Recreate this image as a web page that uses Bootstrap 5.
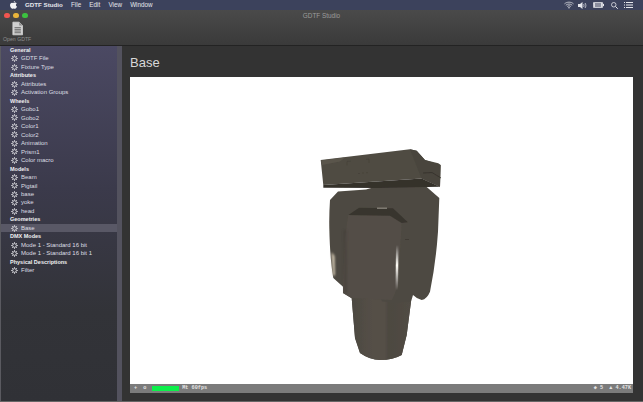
<!DOCTYPE html>
<html lang="en">
<head>
    <meta charset="UTF-8">
    <title>GDTF Studio</title>
    <link href="https://cdn.jsdelivr.net/npm/bootstrap@5.3.0/dist/css/bootstrap.min.css" rel="stylesheet">
    <style>
        html, body { height: 100%; }
        body {
            font-family: "Liberation Sans", Arial, sans-serif;
            background: #333;
            overflow: hidden;
        }
        .app-shell { width: 643px; height: 402px; }
        .mac-menubar {
            height: 10px;
            background: #3c425c;
            color: #e6e7ec;
            font-size: 6.3px;
            line-height: 10px;
            padding: 0 10px 0 10px;
        }
        .mac-menubar b { font-size: 6.2px; }
        .apple-mark { margin-right: 8px; }
        .menu-entry { margin-right: 8.2px; }
        .tray-icon { margin-right: 6.5px; }
        .mac-title {
            height: 35.5px;
            background: linear-gradient(#4a4a4a, #3a3a3a);
            border-bottom: 1px solid #232323;
        }
        .mac-caption {
            font-size: 6.4px;
            color: #9c9c9c;
            line-height: 12px;
            text-align: center;
        }
        .mac-lights { left: 4px; top: 2.6px; gap: 3.5px; }
        .light-dot { width: 5.5px; height: 5.5px; border-radius: 50%; }
        .dot-red { background: #f2564f; }
        .dot-amber { background: #e8b53a; }
        .dot-green { background: #3cc23f; }
        .open-tool {
            width: 28px;
            margin-left: 3px;
            margin-top: -1px;
            color: #8f8f8f;
            font-size: 5.2px;
            line-height: 7px;
            text-align: center;
            white-space: nowrap;
        }
        .work-row { min-height: 0; }
        .side-wrap { width: 122px; background: #2f2f33; }
        .side-tree {
            width: 117px;
            padding-top: 0.5px;
            background: linear-gradient(#4b4963, #3b3a4b 40%, #323338 75%, #303136);
            border-left: 1px solid #5a5a60;
        }
        .side-scroll { width: 5px; background: #53525e; }
        .tree-head, .tree-item {
            height: 8.48px;
            line-height: 8.48px;
            white-space: nowrap;
        }
        .tree-head { color: #f0f0f2; font-weight: 700; font-size: 5.5px; padding-left: 9px; }
        .tree-item { color: #dedee2; font-size: 6px; padding-left: 10px; gap: 3px; }
        .tree-item svg { flex: none; }
        .tree-item.is-picked { background: #595866; }
        .main-pane { padding: 0 10px 8px 8px; background: #333; min-width: 0; }
        .page-head {
            font-size: 13px;
            line-height: 17px;
            color: #d8d8d8;
            margin: 8px 0 6.5px;
            font-weight: 400;
        }
        .viewer-box { background: #fff; min-height: 0; }
        .viewer-box svg { display: block; }
        .viewer-stats {
            height: 9px;
            background: #7b7b7b;
            color: #e4e4e4;
            font-family: "Liberation Mono", monospace;
            font-weight: 700;
            font-size: 5.2px;
            line-height: 9px;
            padding: 0 2px 0 4px;
        }
        .stat-plus { margin-right: 6px; }
        .stat-gap { margin-right: 6px; }
        .fps-meter { width: 27px; height: 4.5px; background: #0cf04a; margin: 0 3px 0 6px; }
        .window-foot { height: 1px; background: #666; flex: none; }
    </style>
</head>
<body>
    <svg width="0" height="0" class="position-absolute">
        <symbol id="gear" viewBox="0 0 12 12">
            <g fill="none" stroke="#cfcfd4">
                <circle cx="6" cy="6" r="3.200" stroke-width="1.700"/>
                <path stroke-width="1.700" d="M6 .3v2.200M6 9.500v2.200M.3 6h2.200M9.500 6h2.200M2 2l1.500 1.500M8.500 8.500L10 10M2 10l1.500-1.500M8.500 3.500L10 2"/>
            </g>
        </symbol>
    </svg>

    <div class="app-shell d-flex flex-column">
        <div class="mac-menubar d-flex align-items-center">
            <svg width="7" height="8" viewBox="0 0 14 16" class="apple-mark"><path fill="#f2f2f5" d="M10.100 0c.1 1.300-1.200 3-2.900 3C7 1.600 8.500.2 10.100 0zM7.200 4c.8 0 1.700-.8 3.200-.8 1.300 0 2.400.7 3.100 1.700-2.600 1.600-2.100 5 .5 6.100-.7 1.800-2.200 4.500-3.800 4.500-1.100 0-1.500-.7-2.900-.7s-1.900.7-2.900.7C2.400 15.500 0 11.500 0 8.200 0 5 2 3.300 4 3.300c1.300 0 2.400.7 3.200.7z"/></svg>
            <b class="menu-entry">GDTF Studio</b>
            <span class="menu-entry">File</span>
            <span class="menu-entry">Edit</span>
            <span class="menu-entry">View</span>
            <span>Window</span>
            <div class="ms-auto d-flex align-items-center">
                <svg width="10" height="8" viewBox="0 0 22 16" class="me-1"><g fill="none" stroke="#e6e7ec" stroke-width="1.600"><path d="M1 5.500C6.500.5 15.500.5 21 5.500"/><path d="M4 8.500c4-3.500 10-3.500 14 0"/><path d="M7 11.300c2.500-2 5.500-2 8 0"/></g><path fill="#e6e7ec" d="M9 13.500c1.200-.8 2.800-.8 4 0l-2 2.500z"/></svg>
                <svg width="9" height="7" viewBox="0 0 18 14" class="tray-icon"><path fill="#e6e7ec" d="M0 4h4l5-4v14l-5-4H0z"/><path fill="none" stroke="#e6e7ec" stroke-width="1.500" d="M11 4c1.300 1.800 1.300 4.200 0 6M14 2c2.300 3 2.300 7 0 10"/></svg>
                <svg width="11" height="6" viewBox="0 0 22 12" class="tray-icon"><rect x=".5" y=".5" width="19" height="11" rx="2" fill="#d9dae0" stroke="#e6e7ec"/><rect x="20" y="4" width="2" height="4" fill="#e6e7ec"/><path fill="#3c425c" d="M5 2h2v8H5zM9 2h2v8H9zM13 2h2v8h-2z"/></svg>
                <svg width="7" height="7" viewBox="0 0 14 14" class="tray-icon"><circle cx="5.500" cy="5.500" r="4.500" fill="none" stroke="#e6e7ec" stroke-width="1.600"/><path stroke="#e6e7ec" stroke-width="2" d="M9 9l4.500 4.500"/></svg>
                <svg width="9" height="6" viewBox="0 0 18 12"><path fill="#e6e7ec" d="M0 0h2v2H0zM4 0h14v2H4zM0 5h2v2H0zM4 5h14v2H4zM0 10h2v2H0zM4 10h14v2H4z"/></svg>
            </div>
        </div>

        <div class="mac-title d-flex flex-column">
            <div class="position-relative mac-caption">
                GDTF Studio
                <div class="position-absolute d-flex mac-lights">
                    <span class="light-dot dot-red"></span>
                    <span class="light-dot dot-amber"></span>
                    <span class="light-dot dot-green"></span>
                </div>
            </div>
            <div class="open-tool">
                <svg width="11" height="15" viewBox="0 0 13 16" class="d-block mx-auto"><path fill="#cfcfcf" stroke="#e2e2e2" stroke-width=".8" d="M1 .5h7.500L12.500 4.500v11H1z"/><path fill="#8c8c8c" d="M8.500.5v4h4z"/><path stroke="#4f4f4f" stroke-width=".9" d="M3 7h7.500M3 9h7.500M3 11h7.500M3 13h7.500"/></svg>
                Open GDTF
            </div>
        </div>

        <div class="work-row d-flex flex-grow-1">
            <div class="side-wrap d-flex">
                <div class="side-tree" id="tree"></div>
                <div class="side-scroll"></div>
            </div>
            <div class="main-pane flex-grow-1 d-flex flex-column">
                <h1 class="page-head">Base</h1>
                <div class="viewer-box flex-grow-1 d-flex flex-column">
                    <svg class="flex-grow-1" width="503" height="307" viewBox="130 77 503 307">
                        <defs>
                            <filter id="soften" x="-5%" y="-5%" width="110%" height="110%"><feGaussianBlur stdDeviation=".45"/></filter>
                            <filter id="softenMore" x="-50%" y="-20%" width="200%" height="140%"><feGaussianBlur stdDeviation="1.100"/></filter>
                            <linearGradient id="neckShade" x1="0" x2="1" y1="0" y2="0">
                                <stop offset="0" stop-color="#4d4941"/>
                                <stop offset=".35" stop-color="#544f47"/>
                                <stop offset=".55" stop-color="#554f47"/>
                                <stop offset=".62" stop-color="#4d4841"/>
                                <stop offset="1" stop-color="#514c44"/>
                            </linearGradient>
                            <linearGradient id="rightGlow" x1="0" x2="0" y1="0" y2="1">
                                <stop offset="0" stop-color="#ffffff" stop-opacity="0"/>
                                <stop offset=".45" stop-color="#fffdf6"/>
                                <stop offset="1" stop-color="#ffffff" stop-opacity="0"/>
                            </linearGradient>
                        </defs>
                        <g filter="url(#soften)">
                            <path fill="#4e4a42" d="M338 191.500L330 200Q329 215 329.300 228Q330 260 333.300 278L343 286.700V293L351.700 298.300L355 338L360 353Q370 360 380 360Q393 360 401.700 355L406.700 335L411 301.700L413 295Q417 299 421.700 300Q427 299 430 291.700Q436 262 438 231.700L439.300 198L426.700 187L378 186L366 189.500Z"/>
                            <path fill="#534e46" d="M348.300 215L390 215.700L401.700 223L398 286L392 300L351.700 298.300L343 293V286.700L344.500 240Z"/>
                            <path fill="url(#neckShade)" d="M351.700 298.300L355 338L360 353Q370 360 380 360Q393 360 401.700 355L406.700 335L411 301.700L396 303L382 301.500L381 299.500Z"/>
                            <path fill="#39352f" d="M348.300 215L359 207.700L393 208.300L408 222.300L401.700 223L390 215.700Z"/>
                            <path fill="#8f8b82" d="M377 207.600h10v1.200h-10z"/>
                            <path fill="#3f3b35" d="M405 239h4v1h-4z"/>
                            <path fill="#4f4b42" d="M320.700 160L410 149.300L416.700 150.700L425 160L438.300 163.300L440.700 165L440 186.700L421.700 178.500L323.300 185Z"/>
                            <path fill="#35312c" d="M323.300 185L421.700 178.500L440 186.700L378 188L323.300 187.700Z"/>
                            <path fill="#5a554b" d="M321 160.500L345 157.500L340 161.500L322 165Z"/>
                            <path fill="#48443c" d="M410 149.300L416.700 150.700L425 160L440.500 165L440 186.700L421.700 178.500Z"/>
                            <path fill="none" stroke="#33302a" stroke-width=".8" d="M423 173L432 172.500L441 178"/>
                            <path fill="none" stroke="#3a362f" stroke-width=".5" opacity=".7" d="M347 161.500v4M347 161.500l4-.4M369 159v4M369 159l-3 .3M358 173.500h2M362 173h2M366 172.600h2"/>
                        </g>
                        <path fill="#3f3b35" opacity=".45" filter="url(#softenMore)" d="M343.500 230h3L347 294L344 292Z"/>
                        <path fill="#d2c7b2" filter="url(#softenMore)" d="M331.500 252L334.500 256L335 275L333 276Z"/>
                        <path fill="url(#rightGlow)" d="M396 245h2.500L398 290h-2.500Z"/>
                    </svg>
                    <div class="viewer-stats d-flex align-items-center">
                        <span class="stat-plus">+</span>
                        <span>o</span>
                        <span class="fps-meter"></span>
                        <span>Mt 60fps</span>
                        <span class="ms-auto stat-gap">&#9670; 5</span>
                        <span>&#9650; 4.47K</span>
                    </div>
                </div>
            </div>
        </div>
        <div class="window-foot"></div>
    </div>

    <script>
        // sidebar rows: [heading, items...]
        const tree = [
            ["General", "GDTF File", "Fixture Type"],
            ["Attributes", "Attributes", "Activation Groups"],
            ["Wheels", "Gobo1", "Gobo2", "Color1", "Color2", "Animation", "Prism1", "Color macro"],
            ["Models", "Beam", "Pigtail", "base", "yoke", "head"],
            ["Geometries", "Base"],
            ["DMX Modes", "Mode 1 - Standard 16 bit", "Mode 1 - Standard 16 bit 1"],
            ["Physical Descriptions", "Filter"]
        ];
        let html = "";
        tree.forEach(group => {
            html += `<div class="tree-head">${group[0]}</div>`;
            group.slice(1).forEach(name => {
                const picked = group[0] === "Geometries" ? " is-picked" : "";
                html += `<div class="tree-item d-flex align-items-center${picked}"><svg width="7" height="7"><use href="#gear"/></svg><span>${name}</span></div>`;
            });
        });
        document.getElementById("tree").innerHTML = html;
    </script>
    <script src="https://cdn.jsdelivr.net/npm/bootstrap@5.3.0/dist/js/bootstrap.bundle.min.js"></script>
</body>
</html>
